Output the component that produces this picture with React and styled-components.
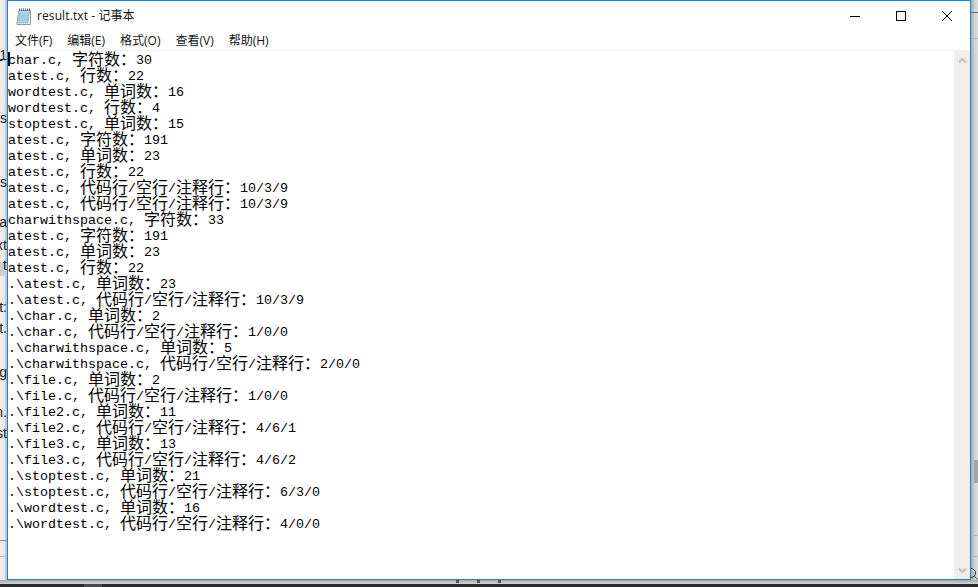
import React from "react";
import styled, { createGlobalStyle } from "styled-components";

const Global = createGlobalStyle`
  html, body { margin: 0; padding: 0; width: 978px; height: 587px; overflow: hidden; background: #e9e9e9; }
  #root { width: 978px; height: 587px; }
`;

const Screen = styled.div`
  width: 978px;
  height: 587px;
  display: grid;
  grid-template-columns: 7px 964px 7px;
  grid-template-rows: 580px 4px 3px;
  overflow: hidden;
  background: #e6e6e6;
`;

const LeftPeek = styled.div`
  position: relative;
  background: linear-gradient(90deg, #efefef 0%, #e8e8e8 60%, #b8b8b8 100%);
  overflow: hidden;
`;

const Fragment = styled.span`
  position: absolute;
  right: ${(p) => p.$right || 0}px;
  top: ${(p) => p.$top}px;
  font: 14px/16px "Liberation Sans", sans-serif;
  color: #1c1c1c;
`;

const HighlightRow = styled.div`
  position: absolute;
  left: 0;
  right: 0;
  top: 262px;
  height: 14px;
  background: #cfcfcf;
`;

const RightPeek = styled.div`
  position: relative;
  background: linear-gradient(90deg, #a9a9a9 0%, #cfcfcf 50%, #dedede 100%);
  overflow: hidden;
`;

const PeekLine = styled.div`
  position: absolute;
  left: 0;
  right: 0;
  top: ${(p) => p.$top}px;
  height: 1px;
  background: ${(p) => p.$color};
`;

const PeekThumb = styled.div`
  position: absolute;
  right: 0;
  top: 460px;
  width: 4px;
  height: 23px;
  background: #a6a6a6;
`;

const PeekLens = styled.svg`
  position: absolute;
  left: 0;
  top: 566px;
`;

const Window = styled.main`
  box-sizing: border-box;
  border: 1px solid #1883d7;
  background: #fff;
  display: flex;
  flex-direction: column;
  min-height: 0;
  position: relative;
`;

const TitleBar = styled.header`
  height: 30px;
  display: flex;
  align-items: center;
  padding-left: 8px;
  flex: none;
`;

const TitleText = styled.span`
  margin-left: 4px;
  font: 12px/16px "Open Sans", "Noto Sans CJK SC", sans-serif;
  letter-spacing: 0.1px;
  color: #111;
  flex: 1;
`;

const Controls = styled.div`
  display: flex;
`;

const ControlButton = styled.div`
  width: 46px;
  height: 30px;
  display: flex;
  align-items: center;
  justify-content: center;
`;

const MenuBar = styled.nav`
  height: 19px;
  display: flex;
  align-items: center;
  gap: 15px;
  padding-left: 7px;
  flex: none;
`;

const MenuItem = styled.span`
  font: 12px/16px "Open Sans", "Noto Sans CJK SC", sans-serif;
  color: #111;
  white-space: nowrap;
`;

const Body = styled.div`
  flex: 1;
  min-height: 0;
  display: flex;
  border-top: 1px solid #f0f0f0;
`;

const TextArea = styled.div`
  flex: 1;
  position: relative;
`;

const Caret = styled.div`
  position: absolute;
  left: 0;
  top: 1px;
  width: 2px;
  height: 14px;
  background: #000;
`;

const Line = styled.div`
  height: 16px;
  line-height: 20px;
  font-family: "Liberation Mono", monospace;
  font-size: 13.333px;
  color: #000;
  white-space: pre;
`;

const Wide = styled.span`
  font-family: "Noto Sans CJK SC", sans-serif;
  font-size: 16px;
  line-height: 0;
  vertical-align: -1px;
`;

const ScrollTrack = styled.aside`
  width: 16px;
  background: #eeeeee;
  display: flex;
  flex-direction: column;
  justify-content: space-between;
  align-items: center;
  padding: 6px 0 5px;
  box-sizing: border-box;
`;

const BottomGap = styled.div`
  grid-column: 1 / -1;
  position: relative;
  background: linear-gradient(180deg, #a8a8a8, #d4d4d4);
`;

const GapMark = styled.div`
  position: absolute;
  left: ${(p) => p.$left}px;
  top: 0;
  width: 3px;
  height: 3px;
  background: #555;
`;

const Taskbar = styled.footer`
  grid-column: 1 / -1;
  background: #2a2a2a;
  display: flex;
  padding-left: 84px;
`;

const TaskbarItem = styled.div`
  width: 18px;
  background: #4a4a4a;
`;

const lines = [
  "char.c, 字符数：30",
  "atest.c, 行数：22",
  "wordtest.c, 单词数：16",
  "wordtest.c, 行数：4",
  "stoptest.c, 单词数：15",
  "atest.c, 字符数：191",
  "atest.c, 单词数：23",
  "atest.c, 行数：22",
  "atest.c, 代码行/空行/注释行：10/3/9",
  "atest.c, 代码行/空行/注释行：10/3/9",
  "charwithspace.c, 字符数：33",
  "atest.c, 字符数：191",
  "atest.c, 单词数：23",
  "atest.c, 行数：22",
  ".\\atest.c, 单词数：23",
  ".\\atest.c, 代码行/空行/注释行：10/3/9",
  ".\\char.c, 单词数：2",
  ".\\char.c, 代码行/空行/注释行：1/0/0",
  ".\\charwithspace.c, 单词数：5",
  ".\\charwithspace.c, 代码行/空行/注释行：2/0/0",
  ".\\file.c, 单词数：2",
  ".\\file.c, 代码行/空行/注释行：1/0/0",
  ".\\file2.c, 单词数：11",
  ".\\file2.c, 代码行/空行/注释行：4/6/1",
  ".\\file3.c, 单词数：13",
  ".\\file3.c, 代码行/空行/注释行：4/6/2",
  ".\\stoptest.c, 单词数：21",
  ".\\stoptest.c, 代码行/空行/注释行：6/3/0",
  ".\\wordtest.c, 单词数：16",
  ".\\wordtest.c, 代码行/空行/注释行：4/0/0",
];

const menus = ["文件(F)", "编辑(E)", "格式(O)", "查看(V)", "帮助(H)"];

const fragments = [
  { top: 47, text: "1" },
  { top: 52, text: "-", right: 4 },
  { top: 110, text: "ns" },
  { top: 174, text: "s" },
  { top: 214, text: "la" },
  { top: 237, text: "xt" },
  { top: 257, text: "t" },
  { top: 299, text: "t:" },
  { top: 320, text: "t." },
  { top: 364, text: "ig" },
  { top: 404, text: "n." },
  { top: 425, text: "st" },
];

const renderLine = (text) =>
  text.split(/([\u3000-\u9fff\uff00-\uffef]+)/).map((part, i) =>
    i % 2 ? <Wide key={i}>{part}</Wide> : part
  );

const NotepadIcon = () => (
  <svg width="17" height="17" viewBox="1 0 17 17">
    <path d="M4 2.5h11.5v14H2z" fill="#fff" stroke="#8a9aa5" />
    <path d="M4 2.5h10.5l-1.5 12.5H2z" fill="#b4d9ee" stroke="#7d98a8" strokeWidth="0.7" />
    <path d="M3.6 6h10M3.4 8h10M3.1 10h10M2.9 12h10" stroke="#93bdd6" />
    <path d="M4.5 0.5v2.5M6.5 0.5v2.5M8.5 0.5v2.5M10.5 0.5v2.5M12.5 0.5v2.5M14.5 0.5v2.5" stroke="#5b666e" />
  </svg>
);

const Chevron = ({ down }) => (
  <svg width="9" height="7" viewBox="0 0 9 7">
    <path d={down ? "M1 1.5l3.5 3.5 3.5-3.5" : "M1 5.5l3.5-3.5 3.5 3.5"} fill="none" stroke="#c2c2c2" strokeWidth="2.2" />
  </svg>
);

export default function App() {
  return (
    <>
      <Global />
      <Screen>
        <LeftPeek>
          <HighlightRow />
          <PeekLine $top={540} $color="#8f8f8f" />
          <PeekLine $top={556} $color="#bdbdbd" />
          {fragments.map((f) => (
            <Fragment key={f.top} $top={f.top} $right={f.right}>{f.text}</Fragment>
          ))}
        </LeftPeek>
        <Window>
          <TitleBar>
            <NotepadIcon />
            <TitleText>result.txt - 记事本</TitleText>
            <Controls>
              <ControlButton>
                <svg width="10" height="10" viewBox="0 0 10 10"><path d="M0 5.5h10" stroke="#000" /></svg>
              </ControlButton>
              <ControlButton>
                <svg width="10" height="10" viewBox="0 0 10 10"><rect x="0.5" y="0.5" width="9" height="9" fill="none" stroke="#000" /></svg>
              </ControlButton>
              <ControlButton>
                <svg width="10" height="10" viewBox="0 0 10 10"><path d="M0 0l10 10M10 0L0 10" stroke="#000" /></svg>
              </ControlButton>
            </Controls>
          </TitleBar>
          <MenuBar>
            {menus.map((m) => <MenuItem key={m}>{m}</MenuItem>)}
          </MenuBar>
          <Body>
            <TextArea>
              <Caret />
              {lines.map((l, i) => <Line key={i}>{renderLine(l)}</Line>)}
            </TextArea>
            <ScrollTrack>
              <Chevron />
              <Chevron down />
            </ScrollTrack>
          </Body>
        </Window>
        <RightPeek>
          <PeekLine $top={12} $color="#6e6e6e" />
          <PeekLine $top={38} $color="#b4b4b4" />
          <PeekLine $top={535} $color="#bcbcbc" />
          <PeekLine $top={556} $color="#bcbcbc" />
          <PeekThumb />
          <PeekLens width="7" height="14" viewBox="0 0 7 14">
            <circle cx="0" cy="7" r="4.5" fill="none" stroke="#333" />
            <path d="M3.5 10.5l3 3" stroke="#333" />
          </PeekLens>
        </RightPeek>
        <BottomGap>
          <GapMark $left={456} />
          <GapMark $left={477} />
          <GapMark $left={498} />
        </BottomGap>
        <Taskbar><TaskbarItem /></Taskbar>
      </Screen>
    </>
  );
}
